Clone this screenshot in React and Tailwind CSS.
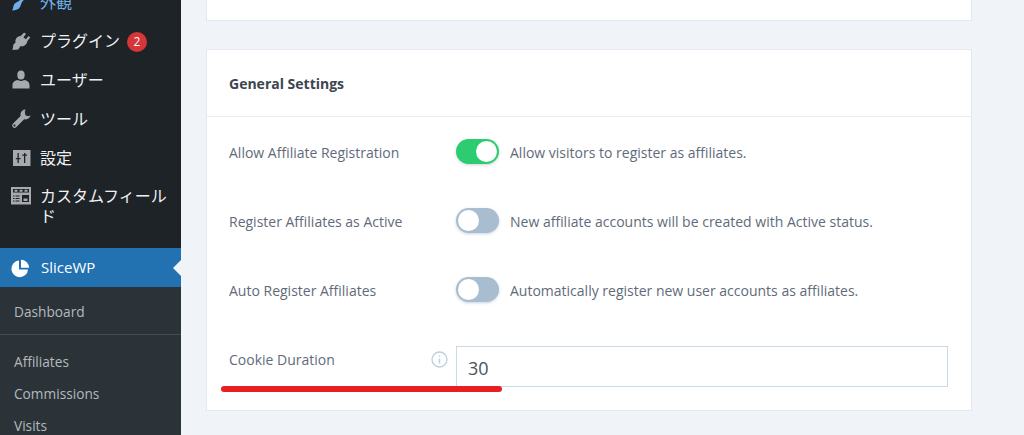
const sans = "font-['Open_Sans','Noto_Sans_CJK_JP',sans-serif]";

function BrushIcon() {
  return (
    <svg width="20" height="20" viewBox="0 0 20 20" fill="#72aee6">
      <path d="M14 0h5l1 4-3 2-1.500-1L11 10l-2 5c-1 2-4 3.500-8 3.500 1-1 1-4 2-6 1-1.500 3-2.500 5-3.500l4.500-4.500L11 3z" />
    </svg>
  );
}

function PluginIcon() {
  return (
    <svg width="20" height="20" viewBox="0 0 20 20" fill="#a7aaad">
      <path d="M13.100 1.500 15 3l-2.600 3.300 2.500 2 2.600-3.300 1.800 1.400-2.900 3.600c-.3 2-1.400 3.500-2.900 4.500-1.400.9-2.900 1-4 .6L7.300 18.500 1.500 19l.9-5.600 2.200-1.900c-.4-1.100-.2-2.700.6-4 .9-1.400 2.400-2.500 4.500-2.500z" />
    </svg>
  );
}

function UserIcon() {
  return (
    <svg width="20" height="20" viewBox="0 0 20 20" fill="#a7aaad">
      <ellipse cx="10" cy="5" rx="3.700" ry="4.500" />
      <path d="M1.500 15c0-3 2.500-4.500 5.500-5 1.500 1.200 4.500 1.200 6 0 3 .5 5.500 2 5.500 5v3.500h-17z" />
    </svg>
  );
}

function WrenchIcon() {
  return (
    <svg width="20" height="20" viewBox="0 0 20 20" fill="#a7aaad">
      <path d="M3.500 16.500 12 8" stroke="#a7aaad" strokeWidth="4.600" strokeLinecap="round" />
      <circle cx="14.500" cy="5.500" r="5" />
      <path d="M15 -1h6v6l-3 2.200-3.500-.7-.7-3.700z" fill="#1d2327" />
      <circle cx="3.500" cy="16.500" r="1.100" fill="#1d2327" />
    </svg>
  );
}

function SlidersIcon() {
  return (
    <svg width="20" height="20" viewBox="0 0 20 20" fill="#a7aaad">
      <path
        fillRule="evenodd"
        d="M2 2h17.500v16H2zM6.500 5v5H4.800v1.300h1.700V15h1.300v-3.700h1.700V10H7.800V5zm6.500 0v1.500h-1.700v1.300H13V15h1.300V7.800H16V6.500h-1.700V5z"
      />
    </svg>
  );
}

function TableIcon() {
  return (
    <svg width="20" height="20" viewBox="0 0 20 20" fill="#a7aaad">
      <path
        fillRule="evenodd"
        d="M0 1h20v17.500H0zM2 3v3.500h16V3zm0 6.500v.9h1.500v-.9zm2.500 0v.9h4v-.9zM2 12v.9h1.500V12zm2.500 0v.9h4V12zM2 14.500v.9h1.500v-.9zm2.500 0v.9h4v-.9zM11 9v7h7V9z"
      />
      <path d="M3.500 3.800h3v1.900h-3zM8.500 3.800h3v1.900h-3zM13.500 3.800h3v1.900h-3zM12.500 12.500h4v2.500h-4z" />
    </svg>
  );
}

function PieIcon() {
  return (
    <svg width="19" height="19" viewBox="0 0 19 19" fill="#fff">
      <path d="M8 1.600V10.500h9A8.300 8.300 0 1 1 8 1.600z" />
      <path d="M10 .8a8.300 8.300 0 0 1 8.200 8H10z" />
    </svg>
  );
}

function MenuItem({ icon, label, badge }) {
  return (
    <div className="flex items-start h-[39px] pt-2 pl-[11px] text-[#f0f0f1] text-[16px] leading-[22px]">
      <div className="w-[29px] shrink-0 pt-px">{icon}</div>
      <span className="whitespace-nowrap">{label}</span>
      {badge && (
        <span className="ml-[7px] mt-[2px] w-5 h-5 rounded-full bg-[#d63638] text-white text-[12px] leading-5 text-center">
          {badge}
        </span>
      )}
    </div>
  );
}

function Toggle({ on }) {
  return (
    <div
      className={`w-[43px] h-[25px] mb-[2px] rounded-full p-[2px] flex shadow-[0_1px_3px_rgba(100,130,160,0.35)] ${
        on ? "bg-[#2ecc71] justify-end" : "bg-[#a9bdd0] justify-start"
      }`}
    >
      <div className="w-[21px] h-[21px] rounded-full bg-white" />
    </div>
  );
}

function SettingRow({ label, text, on }) {
  return (
    <div className="flex items-center h-[25px] mb-[44px]">
      <div className="w-[227px] shrink-0 text-[14px] text-[#5f6b7a]">{label}</div>
      <Toggle on={on} />
      <div className="ml-[11px] text-[14px] text-[#5f6b7a]">{text}</div>
    </div>
  );
}

export default function App() {
  return (
    <div className={`relative flex h-[435px] w-[1024px] overflow-hidden bg-[#f0f4f8] ${sans}`}>
      <aside className="w-[181px] shrink-0 bg-[#1d2327] overflow-hidden flex flex-col">
        <div className="-mt-[17px]">
          <div className="flex items-start h-[39px] pt-2 pl-[11px] text-[#72aee6] text-[16px] leading-[22px]">
            <div className="w-[29px] shrink-0 pt-px">
              <BrushIcon />
            </div>
            <span>外観</span>
          </div>
          <MenuItem icon={<PluginIcon />} label="プラグイン" badge="2" />
          <MenuItem icon={<UserIcon />} label="ユーザー" />
          <MenuItem icon={<WrenchIcon />} label="ツール" />
          <MenuItem icon={<SlidersIcon />} label="設定" />
          <div className="flex items-start pt-2 pl-[11px] h-[70px] text-[#f0f0f1] text-[16px] leading-5">
            <div className="w-[29px] shrink-0">
              <TableIcon />
            </div>
            <span className="w-[132px]">カスタムフィールド</span>
          </div>
        </div>
        <div className="relative flex items-center h-[39px] shrink-0 pl-[11px] bg-[#2271b1] text-white text-[15px]">
          <div className="w-[30px] shrink-0 pt-px">
            <PieIcon />
          </div>
          <span>SliceWP</span>
          <div className="absolute right-0 top-[12px] w-0 h-0 border-y-[8px] border-y-transparent border-r-[8px] border-r-[#f0f4f8]" />
        </div>
        <div className="flex-1 bg-[#2c3338] text-[#b4b9be] text-[13.7px]">
          <div className="h-[48px] pl-[14px] pt-[15px] leading-[20px] border-b border-[#454b50]">Dashboard</div>
          <div className="pl-[14px] pt-[17px] flex flex-col gap-3 leading-[20px]">
            <div>Affiliates</div>
            <div>Commissions</div>
            <div>Visits</div>
          </div>
        </div>
      </aside>

      <main className="flex-1 pl-[25px] pr-[52px]">
        <div className="h-[21px] bg-white border border-t-0 border-[#e2e8f0]" />
        <section className="mt-[28px] h-[362px] bg-white border border-[#e2e8f0]">
          <div className="h-[67px] pl-[22px] pt-px flex items-center border-b border-[#e6ecf2] text-[14px] font-bold text-[#3d4550]">
            General Settings
          </div>
          <div className="pl-[22px] pr-[23px] pt-[23px]">
            <SettingRow label="Allow Affiliate Registration" text="Allow visitors to register as affiliates." on />
            <SettingRow label="Register Affiliates as Active" text="New affiliate accounts will be created with Active status." />
            <SettingRow label="Auto Register Affiliates" text="Automatically register new user accounts as affiliates." />
            <div className="flex -mt-px">
              <div className="w-[227px] shrink-0 flex justify-between pr-2 pt-[3px] text-[14px] text-[#5f6b7a]">
                <span>Cookie Duration</span>
                <svg className="mt-[2px]" width="17" height="17" viewBox="0 0 17 17" fill="none" stroke="#bccfdf" strokeWidth="1.300">
                  <circle cx="8.500" cy="8.500" r="7.500" />
                  <path d="M8.500 7.500v5M8.500 4.500v1.300" strokeWidth="1.500" />
                </svg>
              </div>
              <div className="flex-1 h-[41px] border border-[#c9d9e6] pl-[11px] pt-2 text-[18px] leading-[27px] text-[#4a5360]">30</div>
            </div>
          </div>
        </section>
      </main>

      <div className="absolute left-[221px] top-[386px] w-[281px] h-[6px] rounded-full bg-[#e62020]" />
    </div>
  );
}
